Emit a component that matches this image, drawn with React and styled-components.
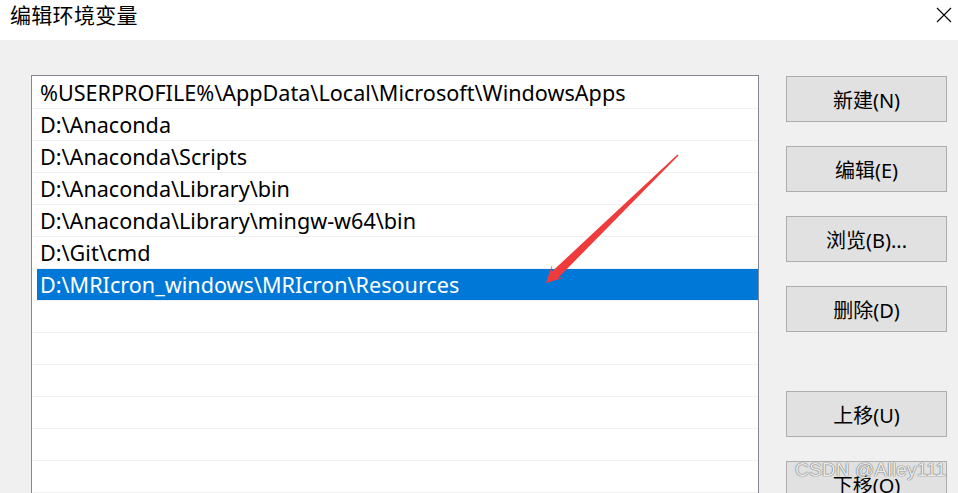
import React from "react";
import styled, { createGlobalStyle } from "styled-components";

const Global = createGlobalStyle`
  html, body { margin: 0; padding: 0; overflow: hidden; background: #f0f0f0; }
  * { box-sizing: border-box; }
`;

const FONT = `"Noto Sans", "Noto Sans CJK SC", sans-serif`;

const Window = styled.div`
  position: relative;
  width: 958px;
  height: 493px;
  overflow: hidden;
  display: flex;
  flex-direction: column;
  font-family: ${FONT};
  color: #000;
`;

const TitleBar = styled.div`
  height: 40px;
  flex: none;
  background: #fff;
  display: flex;
  align-items: flex-start;
  justify-content: space-between;
  padding: 0 6px 0 10px;
`;

const Title = styled.div`
  font-family: "Noto Sans CJK SC", sans-serif;
  font-size: 21px;
  line-height: 29px;
  letter-spacing: 0.3px;
`;

const Close = styled.div`
  width: 16px;
  height: 16px;
  margin-top: 7px;
  display: flex;
`;

const Body = styled.div`
  flex: 1;
  display: flex;
  align-items: flex-start;
  padding: 35px 0 0 31px;
  gap: 27px;
  background: #f0f0f0;
`;

const List = styled.div`
  width: 728px;
  height: 440px;
  flex: none;
  background: #fff;
  border: 1px solid #828790;
  padding-top: 1px;
`;

const Row = styled.div`
  height: 32px;
  margin-left: 1px;
  border-bottom: 1px solid #f0f0f0;
  display: flex;
`;

const Cell = styled.div`
  flex: 1;
  margin-left: 4px;
  padding-left: 3px;
  display: flex;
  align-items: center;
  font-size: 21.6px;
  white-space: nowrap;
  background: ${(p) => (p.$selected ? "#0078d7" : "transparent")};
  color: ${(p) => (p.$selected ? "#fff" : "#000")};
`;

const Buttons = styled.div`
  width: 161px;
  flex: none;
  display: flex;
  flex-direction: column;
  gap: 24px;
  padding-top: 1px;
`;

const Button = styled.div`
  height: 46px;
  flex: none;
  background: #e1e1e1;
  border: 1px solid #adadad;
  display: flex;
  align-items: center;
  justify-content: center;
  font-size: 20px;
  font-family: ${FONT};
  margin-top: ${(p) => (p.$gapBefore ? "35px" : "0")};
`;

const Watermark = styled.div`
  position: absolute;
  left: 795px;
  top: 459px;
  font-family: "Liberation Sans", Arial, sans-serif;
  font-size: 19px;
  color: rgba(255, 255, 255, 0.9);
  text-shadow: 0 0 1px rgba(80, 80, 80, 0.9), 0 0 1px rgba(80, 80, 80, 0.9);
  letter-spacing: 0.2px;
  pointer-events: none;
`;

const Annotation = styled.svg`
  position: absolute;
  left: 0;
  top: 0;
  pointer-events: none;
`;

const rows = [
  "%USERPROFILE%\\AppData\\Local\\Microsoft\\WindowsApps",
  "D:\\Anaconda",
  "D:\\Anaconda\\Scripts",
  "D:\\Anaconda\\Library\\bin",
  "D:\\Anaconda\\Library\\mingw-w64\\bin",
  "D:\\Git\\cmd",
  "D:\\MRIcron_windows\\MRIcron\\Resources",
  "",
  "",
  "",
  "",
  "",
  "",
];

const buttons = [
  { label: "新建(N)" },
  { label: "编辑(E)" },
  { label: "浏览(B)..." },
  { label: "删除(D)" },
  { label: "上移(U)", gap: true },
  { label: "下移(O)" },
];

export default function App() {
  return (
    <>
      <Global />
      <Window>
        <TitleBar>
          <Title>编辑环境变量</Title>
          <Close>
            <svg width="16" height="16" viewBox="0 0 16 16">
              <path d="M1 1 L15 15 M15 1 L1 15" stroke="#000" strokeWidth="1.1" fill="none" />
            </svg>
          </Close>
        </TitleBar>
        <Body>
          <List>
            {rows.map((r, i) => (
              <Row key={i}>
                <Cell $selected={i === 6}>{r}</Cell>
              </Row>
            ))}
          </List>
          <Buttons>
            {buttons.map((b) => (
              <Button key={b.label} $gapBefore={b.gap}>
                {b.label}
              </Button>
            ))}
          </Buttons>
        </Body>
        <Annotation width="958" height="493" viewBox="0 0 958 493">
          <polygon
            points="678.5,155.5 558,278 564.5,277.5 546,283 552,265 551.5,272 677.5,154.5"
            fill="#ef3b3b"
          />
        </Annotation>
        <Watermark>CSDN @Alley111</Watermark>
      </Window>
    </>
  );
}
